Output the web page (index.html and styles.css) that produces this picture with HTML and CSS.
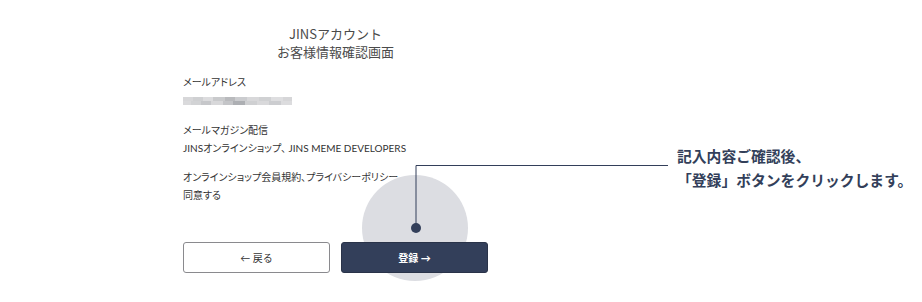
FILE: index.html
```html
<!DOCTYPE html>
<html lang="ja">
<head>
<meta charset="utf-8">
<link rel="stylesheet" href="styles.css">
</head>
<body>
<div class="page">
  <svg class="guide" width="922" height="302" viewBox="0 0 922 302">
    <circle cx="415" cy="228" r="53" fill="#dcdde2"/>
    <polyline points="416,228 416,165.5 668,165.5" fill="none" stroke="#333f5a" stroke-width="1"/>
    <circle cx="416" cy="228" r="5" fill="#333f5a"/>
  </svg>
  <div class="note">記入内容ご確認後、<br>「登録」ボタンをクリックします。</div>
  <main class="form">
    <h1 class="title">JINSアカウント<br>お客様情報確認画面</h1>
    <p class="label first">メールアドレス</p>
    <div class="blur"></div>
    <p class="label gap">メールマガジン配信</p>
    <p class="value">JINSオンラインショップ、 JINS MEME DEVELOPERS</p>
    <p class="label gap2">オンラインショップ会員規約、プライバシーポリシー</p>
    <p class="value">同意する</p>
    <div class="actions">
      <button class="btn back">← 戻る</button>
      <button class="btn submit">登録 →</button>
    </div>
  </main>
</div>
</body>
</html>
```
FILE: styles.css
```css
* { box-sizing: border-box; }
html, body { margin: 0; padding: 0; background: #fff; }
body {
  font-family: "Lato", "Noto Sans CJK JP", sans-serif;
  color: #333;
}
.page {
  position: relative;
  width: 922px;
  height: 302px;
  overflow: hidden;
}
.guide {
  position: absolute;
  left: 0;
  top: 0;
  z-index: 0;
}
.note {
  position: absolute;
  left: 677px;
  top: 144px;
  font-family: "Noto Sans CJK JP", sans-serif;
  font-size: 14.8px;
  line-height: 24px;
  font-weight: 700;
  color: #333f5a;
  white-space: nowrap;
}
.form {
  position: relative;
  z-index: 1;
  width: 305px;
  margin-left: 183px;
  padding-top: 25px;
  display: flex;
  flex-direction: column;
}
.title {
  margin: 0;
  text-align: center;
  font-family: "Noto Sans CJK JP", sans-serif;
  font-weight: 400;
  font-size: 13px;
  line-height: 18px;
  color: #4a4a4a;
}
.label, .value {
  margin: 0;
  font-family: "Lato", "Noto Sans CJK JP", sans-serif;
  font-size: 10px;
  line-height: 18px;
  color: #333;
  font-feature-settings: "palt";
  white-space: nowrap;
}
.label.first { margin-top: 12px; }
.label.gap { margin-top: 16px; }
.label.gap2 { margin-top: 11px; }
.blur {
  margin-top: 6px;
  width: 109px;
  height: 8px;
  background:
    linear-gradient(90deg, #d7d7d9 0 10px, #cfd0d2 10px 20px, #dcdcde 20px 30px, #c9cacc 30px 42px, #b9babd 42px 52px, #cbcccf 52px 64px, #d8d8da 64px 76px, #d0d1d3 76px 88px, #dedee0 88px 100px, #d6d6d8 100px 109px) top / 100% 4px no-repeat,
    linear-gradient(90deg, #dadadc 0 8px, #d2d3d5 8px 18px, #c6c7ca 18px 28px, #d8d8da 28px 40px, #c4c5c8 40px 50px, #adafb3 50px 62px, #cfd0d2 62px 74px, #d9d9db 74px 86px, #cccdd0 86px 98px, #dcdcde 98px 109px) bottom / 100% 4px no-repeat;
}
.actions {
  margin-top: 38px;
  display: grid;
  grid-template-columns: 147px 147px;
  column-gap: 11px;
}
.btn {
  height: 31px;
  border-radius: 3px;
  font-family: "Lato", "Noto Sans CJK JP", sans-serif;
  font-size: 10px;
  cursor: pointer;
  padding: 0;
}
.back {
  background: #fff;
  border: 1px solid #8a8a8e;
  color: #333;
}
.submit {
  background: #333f5a;
  border: 1px solid #2a3349;
  color: #fff;
  font-weight: 700;
}
```
